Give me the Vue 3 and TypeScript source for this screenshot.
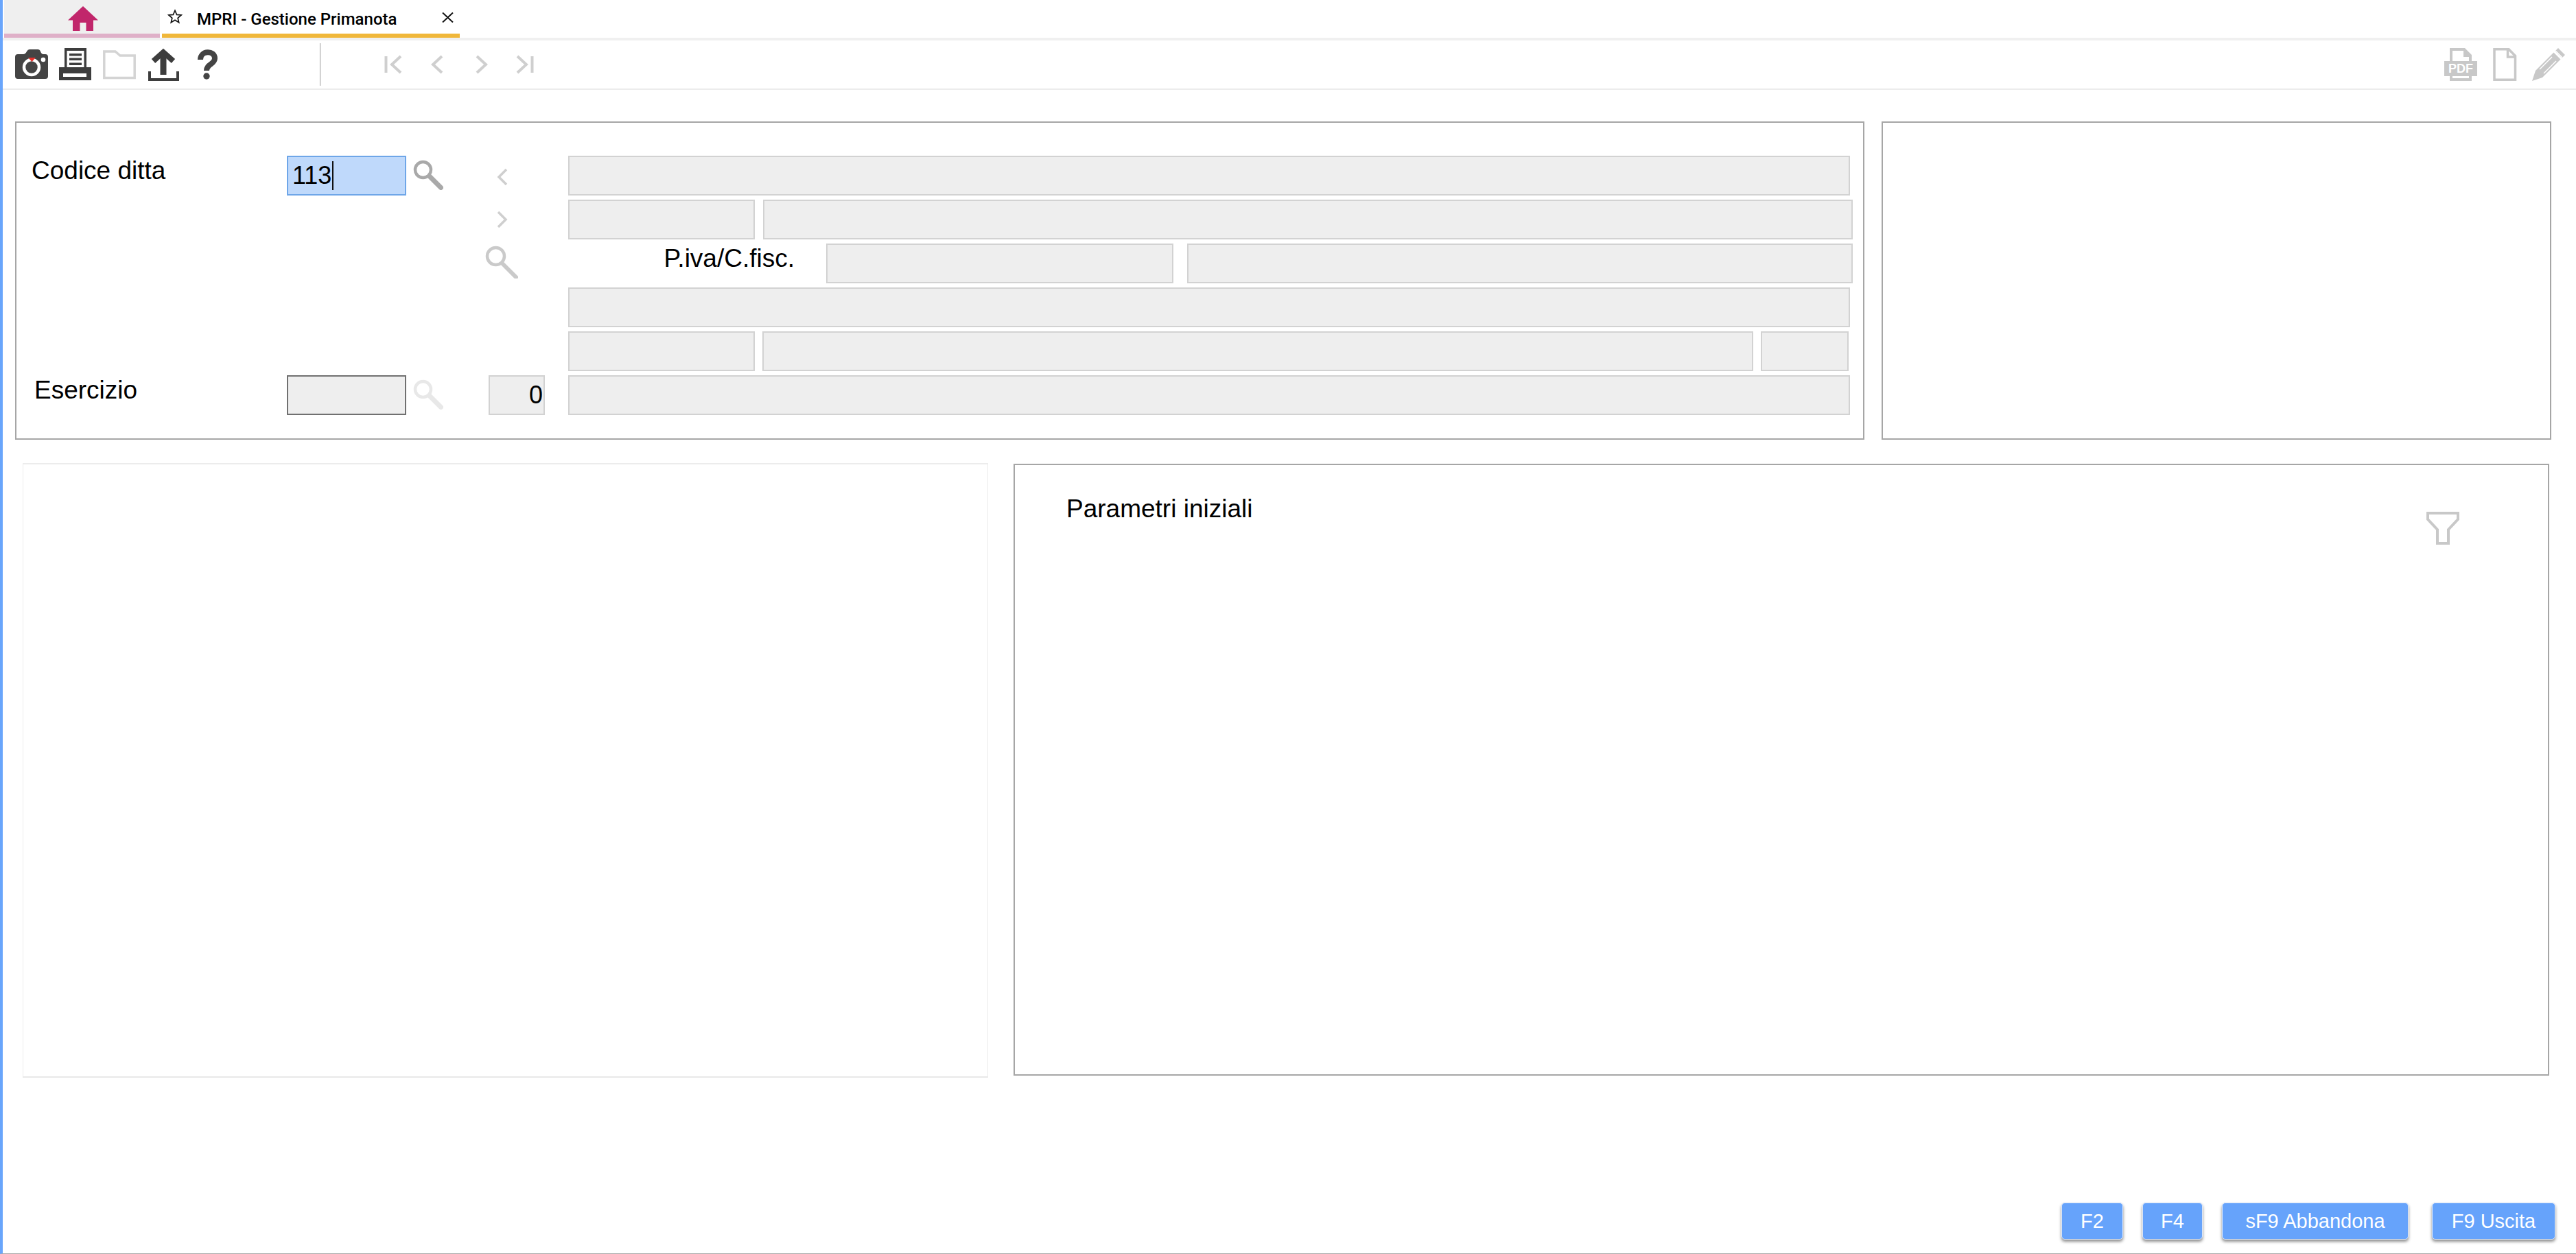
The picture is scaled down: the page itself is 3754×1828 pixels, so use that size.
<script setup lang="ts">
interface Button { label: string; kind: string }
const buttons: Button[] = [
  { label: 'F2', kind: 'b-f2' },
  { label: 'F4', kind: 'b-f4' },
  { label: 'sF9 Abbandona', kind: 'b-abb' },
  { label: 'F9 Uscita', kind: 'b-usc' },
]
</script>

<template>
  <div class="app">
    <div class="tabs">
      <div class="tab home">
        <svg width="44" height="36" viewBox="0 0 44 36"><path fill="#c1266b" d="M22 0 44 20.500H37V36H26.500V24H17.500V36H7V20.500H0Z" /></svg>
      </div>
      <div class="tab active">
        <svg class="star" width="22" height="22" viewBox="0 0 24 24"><path fill="none" stroke="#111" stroke-width="1.800" stroke-linejoin="miter" d="M12 2.500 14.800 9.200 22 9.800 16.500 14.500 18.200 21.600 12 17.800 5.800 21.600 7.500 14.500 2 9.800 9.200 9.200Z" /></svg>
        <span class="tab-title">MPRI - Gestione Primanota</span>
        <svg class="close" width="17" height="15" viewBox="0 0 17 15"><path fill="none" stroke="#111" stroke-width="2" d="M1 0.500 16 14.500M16 0.500 1 14.500" /></svg>
      </div>
    </div>

    <div class="toolbar">
      <div class="tool-group">
        <svg class="ico" viewBox="0 0 48 48">
          <path fill="#444" d="M0 13Q0 9 4 9H12Q15 9 17 5 18.500 2 21 2H33Q36 2 37 5 38.500 9 41 9H44Q48 9 48 13V41Q48 45 44 45H4Q0 45 0 41Z" />
          <circle cx="24" cy="28" r="11" fill="none" stroke="#fff" stroke-width="4.500" />
          <circle cx="41" cy="17" r="3.300" fill="#fff" />
          <path fill="#e5322d" d="M19 14H30L24.500 20Z" />
        </svg>
        <svg class="ico" viewBox="0 0 48 48">
          <path fill="#3d3d3d" d="M8 0H40V28H47V47H0V28H8Z" />
          <path fill="#fff" d="M11.500 4H36.500V28H11.500Z" />
          <path fill="#3d3d3d" d="M15 8H33V11.500H15ZM15 14.500H33V18H15ZM15 21.500H33V25H15Z" />
          <path fill="#fff" d="M6 37H40V42H6Z" />
        </svg>
        <svg class="ico" viewBox="0 0 48 48">
          <path fill="none" stroke="#d4d4d4" stroke-width="3.500" d="M1.800 5H18L25 11H46.200V43.500H1.800Z" />
        </svg>
        <svg class="ico" viewBox="0 0 48 48">
          <path fill="none" stroke="#3d3d3d" stroke-width="8" stroke-linejoin="miter" d="M9.500 19 24 6 38.500 19" />
          <path fill="#3d3d3d" d="M19.500 9H28.500V39H19.500Z" />
          <path fill="#3d3d3d" d="M2 34H6V44H43V34H47V48H2Z" />
        </svg>
        <svg class="ico" viewBox="0 0 48 48">
          <path fill="none" stroke="#444" stroke-width="8" d="M14 17C14 3 35 3 35 15 35 24 23 23 23 33" />
          <circle cx="23" cy="41" r="4.700" fill="#444" />
        </svg>
      </div>
      <div class="sep"></div>
      <div class="tool-group nav">
        <svg class="ico" viewBox="0 0 48 48"><path fill="none" stroke="#cfcfcf" stroke-width="4" d="M13.500 12V36M35 12 22 24 35 36" /></svg>
        <svg class="ico" viewBox="0 0 48 48"><path fill="none" stroke="#cfcfcf" stroke-width="4" d="M31 12 18 24 31 36" /></svg>
        <svg class="ico" viewBox="0 0 48 48"><path fill="none" stroke="#cfcfcf" stroke-width="4" d="M18 12 31 24 18 36" /></svg>
        <svg class="ico" viewBox="0 0 48 48"><path fill="none" stroke="#cfcfcf" stroke-width="4" d="M34.500 12V36M13 12 26 24 13 36" /></svg>
      </div>
      <div class="tool-group right">
        <svg class="ico" viewBox="0 0 48 48">
          <path fill="#c8c8c8" d="M8 0H30L40 10V19H48V41H40V48H8V41H0V19H8Z" />
          <path fill="#fff" d="M12 4H28V13H36V19H12ZM12 41H36V44H12Z" />
          <text x="24" y="36" text-anchor="middle" class="pdf">PDF</text>
        </svg>
        <svg class="ico" viewBox="0 0 48 48"><path fill="none" stroke="#c8c8c8" stroke-width="3.500" d="M9 1.800H30L39.500 11.500V46.200H9ZM28.500 2V13H39" /></svg>
        <svg class="ico" viewBox="0 0 48 48">
          <path fill="#c8c8c8" d="M38 0 48 10 43.500 14.500 33.500 4.500ZM31.500 6.500 41.500 16.500 15 43 0 48 5 33Z" />
          <path fill="none" stroke="#fff" stroke-width="1.500" d="M29 13 11 31M35 19 17 37M34 4 44 14" />
        </svg>
      </div>
    </div>

    <div class="top-row">
      <section class="panel form">
        <div class="label l-code">Codice ditta</div>
        <div class="inp focus"><span>113</span><i class="caret"></i></div>
        <svg class="search s-main" viewBox="0 0 44 44">
          <circle cx="14.500" cy="14.500" r="11.500" fill="none" stroke="#a9a9a9" stroke-width="4.500" />
          <path stroke="#a9a9a9" stroke-width="7" stroke-linecap="round" d="M24 24 40.500 40.500" />
        </svg>
        <svg class="chev" viewBox="0 0 16 24"><path fill="none" stroke="#cfcfcf" stroke-width="3.500" d="M14 1 3 12 14 23" /></svg>

        <div class="stack">
          <div class="row"><div class="fld grow short"></div></div>
          <div class="row"><div class="fld small"></div><div class="fld grow"></div></div>
          <div class="row wide-gap">
            <div class="piva">P.iva/C.fisc.</div>
            <div class="fld mid"></div>
            <div class="fld grow"></div>
          </div>
          <div class="row"><div class="fld grow short"></div></div>
          <div class="row short-2"><div class="fld small"></div><div class="fld grow"></div><div class="fld tiny"></div></div>
          <div class="row"><div class="fld grow short"></div></div>
        </div>

        <svg class="chev c-next" viewBox="0 0 16 24"><path fill="none" stroke="#cfcfcf" stroke-width="3.500" d="M2 1 13 12 2 23" /></svg>
        <svg class="search s-big" viewBox="0 0 48 48">
          <circle cx="15.500" cy="15.500" r="12.500" fill="none" stroke="#cacaca" stroke-width="4.500" />
          <path stroke="#cacaca" stroke-width="6" stroke-linecap="round" d="M25 26 45 46" />
        </svg>

        <div class="label l-ese">Esercizio</div>
        <div class="inp dis"></div>
        <svg class="search s-main s-off" viewBox="0 0 44 44">
          <circle cx="14.500" cy="14.500" r="11.500" fill="none" stroke="#e8e8e8" stroke-width="4.500" />
          <path stroke="#e8e8e8" stroke-width="7" stroke-linecap="round" d="M24 24 40.500 40.500" />
        </svg>
        <div class="fld zero">0</div>
      </section>
      <section class="panel side"></section>
    </div>

    <div class="bottom-row">
      <section class="list-box"></section>
      <section class="panel params">
        <h2 class="params-title">Parametri iniziali</h2>
        <svg class="funnel" width="48" height="48" viewBox="0 0 48 48"><path fill="none" stroke="#c8c8c8" stroke-width="4" d="M2 2H46V11L32 26V46H16V26L2 11Z" /></svg>
      </section>
    </div>

    <div class="footer">
      <button v-for="b in buttons" :key="b.label" class="btn" :class="b.kind">{{ b.label }}</button>
    </div>
  </div>
</template>

<style>
html, body { margin: 0; background: #fff; }
</style>

<style scoped>
.app {
  box-sizing: border-box;
  width: 3754px;
  height: 1828px;
  display: flex;
  flex-direction: column;
  border-left: 4px solid #69a5fb;
  border-bottom: 1px solid #a8a8a8;
  background: #fff;
  font-family: "Liberation Sans", Arial, sans-serif;
  color: #000;
  overflow: hidden;
}
.tabs {
  display: flex;
  gap: 3px;
  height: 55px;
  padding-left: 2px;
  flex: none;
}
.tab { box-sizing: border-box; height: 55px; border-bottom: 6px solid; display: flex; align-items: center; }
.home { width: 227px; background: #efefef; border-bottom-color: #dfb0c8; justify-content: center; padding: 4px 0 0 2px; }
.active { width: 434px; border-bottom-color: #f0b73a; background: #fff; padding-left: 8px; }
.star { flex: none; margin-top: -1px; }
.tab-title { margin-left: 21px; margin-top: 7px; font-family: Roboto, "Liberation Sans", sans-serif; font-weight: 500; font-size: 24px; line-height: 30px; white-space: nowrap; }
.close { margin-left: auto; margin-right: 9px; margin-top: 2px; }

.toolbar {
  flex: none;
  display: flex;
  align-items: center;
  height: 70px;
  padding: 0 16px 0 18px;
  border-top: 4px solid #f0f0f0;
  border-bottom: 2px solid #ececec;
}
.tool-group { display: flex; gap: 16px; align-items: center; }
.ico { width: 48px; height: 48px; display: block; flex: none; }
.sep { width: 1px; height: 62px; margin: 0 82px 0 140px; background: #9a9a9a; }
.right { margin-left: auto; }
.pdf { font-family: "Liberation Sans", sans-serif; font-size: 18px; font-weight: 700; fill: #fff; }

.top-row { display: flex; gap: 25px; margin: 46px 36px 0 18px; flex: none; }
.panel { box-sizing: border-box; border: 2px solid #a6a6a6; background: #fff; }
.form {
  width: 2695px;
  height: 464px;
  display: grid;
  grid-template-columns: 394px 174px 120px 82px 34px 1fr;
  grid-template-rows: repeat(6, 58px);
  row-gap: 6px;
  padding: 48px 15px 0 0;
}
.side { flex: 1; height: 464px; }
.label { font-size: 37px; line-height: 42px; align-self: start; white-space: nowrap; margin-top: 1px; }
.l-code { padding-left: 22px; }
.l-ese { padding-left: 26px; grid-row: 6; grid-column: 1; }
.inp { box-sizing: border-box; height: 58px; border: 2px solid; font-size: 36px; line-height: 54px; padding-left: 6px; display: flex; align-items: center; }
.focus { background: #bfd9fb; border-color: #6ea6e8; }
.caret { width: 2px; height: 42px; background: #111; margin-left: 1px; }
.dis { background: #eee; border-color: #707070; grid-row: 6; grid-column: 2; }
.search { display: block; }
.s-main { width: 44px; height: 44px; margin: 6px 0 0 10px; grid-column: 3; }
.s-off { grid-row: 6; }
.s-big { width: 48px; height: 48px; margin: 3px 0 0 -5px; grid-row: 3; grid-column: 4; }
.chev { width: 16px; height: 24px; margin: 19px 0 0 12px; grid-column: 4; grid-row: 1; }
.c-next { grid-row: 2; margin-top: 17px; }
.stack { grid-column: 6; grid-row: 1 / 7; display: flex; flex-direction: column; gap: 6px; }
.row { display: flex; gap: 12px; height: 58px; }
.wide-gap { gap: 20px; }
.fld { box-sizing: border-box; height: 58px; background: #eee; border: 2px solid #d2d2d2; }
.grow { flex: 1; }
.short { margin-right: 4px; }
.short-2 { margin-right: 6px; gap: 11px; }
.small { width: 272px; flex: none; }
.tiny { width: 128px; flex: none; }
.mid { width: 506px; flex: none; }
.piva { width: 356px; flex: none; text-align: right; font-size: 37px; line-height: 42px; padding-right: 26px; box-sizing: border-box; margin-top: 1px; white-space: nowrap; }
.zero { grid-row: 6; grid-column: 4; width: 82px; font-size: 36px; line-height: 54px; text-align: right; padding-right: 1px; }

.bottom-row { display: flex; gap: 37px; margin: 34px 0 0 29px; align-items: flex-start; flex: none; }
.list-box { box-sizing: border-box; width: 1407px; height: 896px; border: 1px solid #ececec; border-top-width: 2px; border-bottom-width: 2px; border-bottom-color: #e8e8e8; }
.params { box-sizing: border-box; width: 2238px; height: 892px; margin-top: 1px; padding: 40px 50px 0 75px; display: flex; justify-content: space-between; align-items: flex-start; }
.params-title { margin: 3px 0 0; font-size: 37px; font-weight: 400; line-height: 42px; }
.funnel { margin-top: 28px; margin-right: 79px; display: block; }

.footer { margin-top: auto; display: flex; gap: 28px; justify-content: flex-end; padding: 0 30px 20px 0; }
.btn {
  box-sizing: border-box;
  height: 54px;
  border: 1px solid #dbe8fb;
  border-radius: 5px;
  background: #66a3fb;
  color: #fff;
  font-family: "Liberation Sans", Arial, sans-serif;
  font-size: 29px;
  padding: 0;
  box-shadow: 0 3px 4px rgba(0, 0, 0, 0.45);
}
.b-f2 { width: 90px; }
.b-f4 { width: 88px; }
.b-abb { width: 272px; }
.b-usc { width: 180px; margin-left: 6px; }
</style>
